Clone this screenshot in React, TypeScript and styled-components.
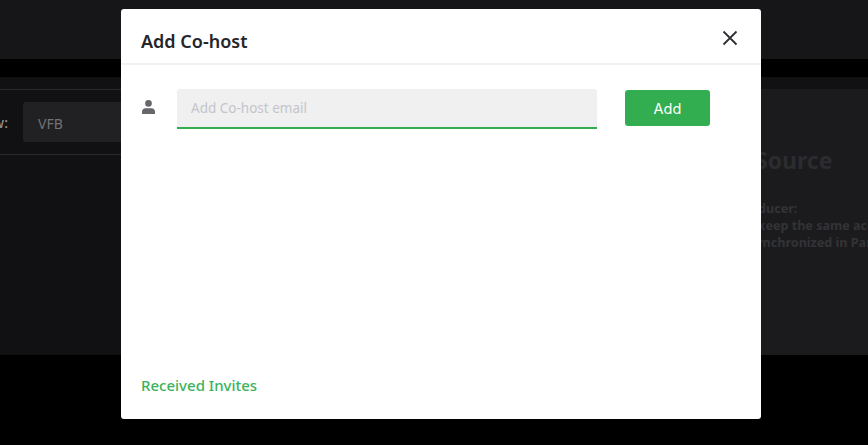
import React from "react";
import styled, { createGlobalStyle } from "styled-components";

const GlobalStyle = createGlobalStyle`
  html, body {
    margin: 0;
    height: 100%;
    background: #000;
    overflow: hidden;
    font-family: "Noto Sans", "Open Sans", sans-serif;
  }
`;

const Page = styled.div`
  width: 868px;
  height: 445px;
  background: #000;
  overflow: hidden;
`;

const TopBar = styled.div`
  height: 59px;
  background: #161618;
`;

const Workspace = styled.div`
  margin-top: 18px;
  height: 278px;
  background: #111113;
  padding-top: 12px;
  box-sizing: border-box;
  display: grid;
  grid-template-columns: 761px 1fr;
`;

const LeftColumn = styled.div`
  overflow: hidden;
`;

const SettingRow = styled.div`
  height: 64px;
  border-top: 1px solid #29292b;
  border-bottom: 1px solid #29292b;
  display: flex;
  align-items: center;
  gap: 15px;
`;

const SettingLabel = styled.span`
  margin-left: -48px;
  width: 56px;
  font-size: 14px;
  font-weight: 500;
  white-space: nowrap;
  color: #8f8f8f;
`;

const SettingField = styled.div`
  width: 300px;
  height: 40px;
  padding: 2px 0 0 15px;
  box-sizing: border-box;
  display: flex;
  align-items: center;
  border-radius: 3px;
  background: #212123;
  font-size: 14px;
  color: #727275;
`;

const RightColumn = styled.div`
  background: #1b1b1d;
  overflow: hidden;
  padding-top: 55px;
`;

const SourceTitle = styled.h2`
  margin: 0 0 24px -6px;
  font-size: 23px;
  line-height: 32px;
  font-weight: 700;
  white-space: nowrap;
  color: #2c2c30;
`;

const SourceLine = styled.div<{ $indent: number }>`
  margin-left: ${(p) => p.$indent}px;
  font-size: 12.6px;
  line-height: 17px;
  font-weight: 700;
  white-space: nowrap;
  color: #333336;
`;

const Modal = styled.div`
  position: absolute;
  left: 121px;
  top: 9px;
  width: 640px;
  height: 410px;
  background: #fff;
  border-radius: 3px;
  display: flex;
  flex-direction: column;
`;

const ModalHeader = styled.div`
  height: 54px;
  padding: 0 21px 0 20px;
  border-bottom: 2px solid #f2f2f2;
  display: flex;
  align-items: center;
  justify-content: space-between;
  flex: none;
`;

const ModalTitle = styled.h3`
  margin: 10px 0 0;
  font-size: 18px;
  line-height: 24px;
  font-weight: 600;
  color: #25252a;
`;

const CloseButton = styled.button`
  width: 20px;
  height: 20px;
  padding: 0;
  border: 0;
  background: none;
  display: flex;
  margin: 4px 0 0;
  color: #2f2f34;
`;

const ModalBody = styled.div`
  flex: 1;
  padding: 24px 20px 0;
  display: flex;
  flex-direction: column;
`;

const InviteRow = styled.div`
  display: flex;
  align-items: flex-start;
`;

const UserIconWrap = styled.span`
  width: 36px;
  height: 36px;
  flex: none;
  display: flex;
  align-items: center;
  padding-left: 1px;
  box-sizing: border-box;
  color: #66666b;
`;

const EmailInput = styled.input`
  width: 420px;
  height: 40px;
  padding: 0 14px;
  box-sizing: border-box;
  border: 0;
  border-bottom: 2px solid #32ad50;
  border-radius: 3px 3px 0 0;
  background: #f0f0f0;
  outline: none;
  font: 400 13.5px "Noto Sans", sans-serif;
  &::placeholder {
    color: #c4c4cc;
    opacity: 1;
  }
`;

const AddButton = styled.button`
  width: 85px;
  height: 36px;
  margin: 1px 0 0 28px;
  border: 0;
  border-radius: 3px;
  background: #32ad50;
  color: #fff;
  font: 400 14.5px Inter, sans-serif;
`;

const InvitesLink = styled.div`
  margin-top: auto;
  padding-bottom: 23px;
  font-size: 15px;
  line-height: 22px;
  font-weight: 500;
  color: #3bb35a;
`;

export default function App() {
  return (
    <Page>
      <GlobalStyle />
      <TopBar />
      <Workspace>
        <LeftColumn>
          <SettingRow>
            <SettingLabel>Preview:</SettingLabel>
            <SettingField>VFB</SettingField>
          </SettingRow>
        </LeftColumn>
        <RightColumn>
          <SourceTitle>Source</SourceTitle>
          <SourceLine $indent={-24}>Producer:</SourceLine>
          <SourceLine $indent={-20}>to keep the same accounts</SourceLine>
          <SourceLine $indent={-12}>synchronized in Panel</SourceLine>
        </RightColumn>
      </Workspace>
      <Modal>
        <ModalHeader>
          <ModalTitle>Add Co-host</ModalTitle>
          <CloseButton aria-label="Close">
            <svg width="20" height="20" viewBox="0 0 20 20" fill="none" stroke="currentColor" strokeWidth="1.8">
              <path d="M3.5 3.5 16.5 16.5M16.5 3.5 3.5 16.5" />
            </svg>
          </CloseButton>
        </ModalHeader>
        <ModalBody>
          <InviteRow>
            <UserIconWrap>
              <svg width="13" height="14" viewBox="0 0 13 14" fill="currentColor">
                <circle cx="6.5" cy="3.4" r="3.3" />
                <path d="M0 14v-2.4C0 9.6 1.6 8.3 3.4 8.3h6.2c1.8 0 3.4 1.3 3.4 3.3V14z" />
              </svg>
            </UserIconWrap>
            <EmailInput placeholder="Add Co-host email" />
            <AddButton>Add</AddButton>
          </InviteRow>
          <InvitesLink>Received Invites</InvitesLink>
        </ModalBody>
      </Modal>
    </Page>
  );
}
